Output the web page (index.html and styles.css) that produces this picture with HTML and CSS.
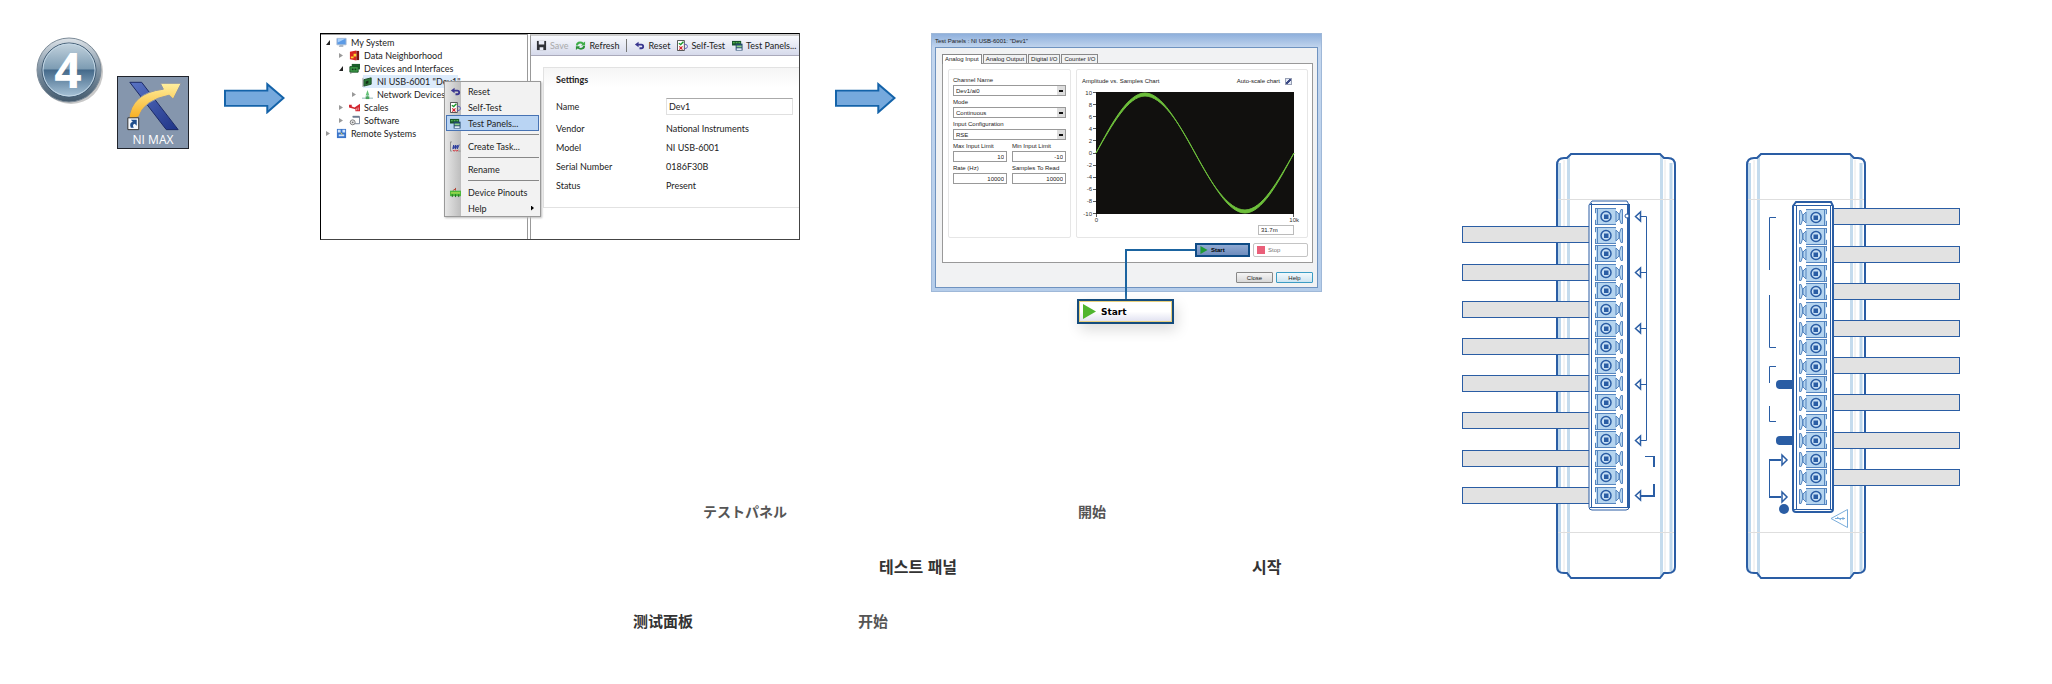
FILE: index.html
```
<!DOCTYPE html>
<html lang="en">
<head>
    <meta charset="UTF-8">
    <meta name="viewport" content="width=device-width, initial-scale=1.0">
    <title>NI MAX - Test Panels</title>
    <link rel="stylesheet" href="styles.css">
</head>
<body>
    <!-- shared icons -->
    <svg class="defs" aria-hidden="true">
        <defs>
            <linearGradient id="ball" x1="0" y1="0" x2="0" y2="1">
                <stop offset="0" stop-color="#c3d3de"/>
                <stop offset=".48" stop-color="#7d9cb3"/>
                <stop offset=".5" stop-color="#44698a"/>
                <stop offset="1" stop-color="#a9c4d8"/>
            </linearGradient>
            <linearGradient id="rim" x1="0" y1="0" x2="0" y2="1">
                <stop offset="0" stop-color="#dde3e8"/>
                <stop offset=".5" stop-color="#7f93a4"/>
                <stop offset="1" stop-color="#43596c"/>
            </linearGradient>
            <linearGradient id="gold" x1="0" y1="0" x2="0" y2="1">
                <stop offset="0" stop-color="#fff0a0"/>
                <stop offset="1" stop-color="#f7ac1c"/>
            </linearGradient>
            <linearGradient id="navy" x1="0" y1="0" x2="1" y2="1">
                <stop offset="0" stop-color="#5a74c4"/>
                <stop offset="1" stop-color="#1f3487"/>
            </linearGradient>
        </defs>
        <symbol id="arrow" viewBox="0 0 62 32">
            <path d="M1 8.500H44V2L60.500 16 44 30.500V24H1Z" fill="#76a9dd" stroke="#1463a9" stroke-width="2"/>
        </symbol>
        <symbol id="i-reset" viewBox="0 0 12 12">
            <path d="M1 5L5 2V4H8Q11 4 11 7T8 10H6V8H8Q9 8 9 7T8 6H5V8Z" fill="#39358f"/>
        </symbol>
        <symbol id="i-test" viewBox="0 0 12 12">
            <path d="M.500 .500H8V11.500H.500Z" fill="#fff" stroke="#444"/>
            <path d="M2 3.500L4 5 7 2" fill="none" stroke="#1b9a2c" stroke-width="1.500"/>
            <path d="M2.500 7L6 10.500M6 7L2.500 10.500" stroke="#d3202a" stroke-width="1.300"/>
            <path d="M8 4.500Q11.500 4.500 11.500 7T8 9.500" fill="none" stroke="#5a5ab8"/>
        </symbol>
        <symbol id="i-panels" viewBox="0 0 12 12">
            <path d="M0 1H10V6H0Z" fill="#17552b"/>
            <path d="M1 3H3M4 3H6M7 3H9" stroke="#6fdc5f"/>
            <path d="M4 4H11.500V11.500H4Z" fill="#244a6e"/>
            <path d="M5 6H10.500V8H5Z" fill="#8fd18a"/>
            <path d="M5 9H10.500V11H5Z" fill="#dfe9f5"/>
        </symbol>
        <symbol id="i-save" viewBox="0 0 12 12">
            <path d="M1 1H11V11H1Z" fill="#2f3136"/>
            <path d="M3 1H9V5H3ZM4 8H8V11H4Z" fill="#e9ecf6"/>
        </symbol>
        <symbol id="i-refresh" viewBox="0 0 12 12">
            <path d="M1 6Q1 2 5.500 1.700 8 1.700 9.300 3L11 1.500V6H6.500L8 4.500Q4.500 2.500 3 6Z" fill="#3fae49"/>
            <path d="M11 6.500Q11 10.300 6.500 10.500 4.500 10.500 2.900 9.300L1 11V6.800H5.500L4.200 8Q7.500 9.800 9 6.500Z" fill="#2a9136"/>
        </symbol>
        <symbol id="i-task" viewBox="0 0 12 12">
            <path d="M2 1H.500V11H2M9 11H11.500" fill="none" stroke="#888"/>
            <path d="M3 8.500L4 4.500V8.500L6 4.500V8.500L8 4.500V8.500L10 4" fill="none" stroke="#22349b"/>
            <path d="M3 10L4.500 11 6 10 7.500 11 9 10" fill="none" stroke="#d3202a"/>
        </symbol>
        <symbol id="i-pinout" viewBox="0 0 12 12">
            <path d="M6 4V1M3 4L6 2" fill="none" stroke="#b04030"/>
            <path d="M0 4H12V10H0Z" fill="#4bb83c"/>
            <path d="M1 6.500H11" stroke="#d9ef5a"/>
            <path d="M2.500 8V11M6 8V11M9.500 8V11" stroke="#1d6b1d"/>
        </symbol>
        <symbol id="i-pc" viewBox="0 0 12 12">
            <path d="M1 1.500H11V8.500H1Z" fill="#5c9be6" stroke="#a8bad2"/>
            <path d="M2 2H10L2 6Z" fill="#a9d0fa"/>
            <path d="M4 9H8V10.500H3" fill="#98a4b4"/>
        </symbol>
        <symbol id="i-data" viewBox="0 0 12 12">
            <path d="M1 2L8 .500V11.500L1 10Z" fill="#d9251f"/>
            <path d="M8 1H11V11H8Z" fill="#7b1511"/>
            <path d="M2 7H5V9H2ZM5 4H8V7H5Z" fill="#ffd52e"/>
        </symbol>
        <symbol id="i-devs" viewBox="0 0 12 12">
            <path d="M3 1H12V7H3Z" fill="#1b5e2b"/>
            <path d="M1 4H10V10H1Z" fill="#3d9e49" stroke="#174d22"/>
            <path d="M3 6H5V8H3ZM6 6H8V8H6Z" fill="#14391c"/>
            <path d="M2 10V12" stroke="#888"/>
        </symbol>
        <symbol id="i-card" viewBox="0 0 12 12">
            <path d="M2 4L10 2V9L2 11Z" fill="#2d7a38" stroke="#1a4a24"/>
            <path d="M4 6L7 5V8L4 9Z" fill="#143018"/>
            <path d="M1 2V12" stroke="#999"/>
        </symbol>
        <symbol id="i-net" viewBox="0 0 12 12">
            <path d="M4 7L6 1 8 7Z" fill="#5fc470"/>
            <path d="M0 10H12M6 6V10" stroke="#8ab0b0"/>
            <path d="M4 8H8V11H4Z" fill="#49a55c"/>
        </symbol>
        <symbol id="i-scale" viewBox="0 0 12 12">
            <path d="M0 3H3V5L6 6 12 2V10H7V8L0 6Z" fill="#d22630"/>
            <path d="M8 7V9M10 6V9" stroke="#f4b5b8"/>
        </symbol>
        <symbol id="i-soft" viewBox="0 0 12 12">
            <path d="M4 1.500H11.500V9.500H6" fill="#fff" stroke="#6d7b90"/>
            <path d="M4 2H11" stroke="#6d7b90" stroke-width="2"/>
            <circle cx="4" cy="8" r="2.700" fill="#e9e9e9" stroke="#777"/>
            <circle cx="4" cy="8" r="1" fill="#777"/>
        </symbol>
        <symbol id="i-remote" viewBox="0 0 12 12">
            <path d="M1 1H11V11H1Z" fill="#3a74c9"/>
            <path d="M2 2H5V5H2ZM7 2H10V5H7ZM3 7H9V9H3Z" fill="#cfe3fb"/>
            <path d="M5 5L7 7" stroke="#f0cf3a"/>
        </symbol>
        <symbol id="case" viewBox="0 0 122 432" overflow="visible">
            <path d="M4.500 12V420M116 12V420" stroke="#bdd7ec" stroke-width="3"/>
            <path d="M13.500 5V426M106.500 5V426" stroke="#c4dbed" stroke-width="3"/>
            <path d="M9 9V422M110 9V422" stroke="#e6e6e6"/>
            <path d="M2 48.500H120M2 381.500H120" stroke="#dedede"/>
            <path d="M2 14Q2 7 9 7H12L16 3H105L109 7H113Q120 7 120 14V416Q120 422 113 422H109L105 427H16L12 422H9Q2 422 2 416Z" fill="none" stroke="#2a5da4" stroke-width="2"/>
        </symbol>
        <symbol id="screw" viewBox="0 0 30 17" overflow="visible">
            <path d="M0 0H21V17H0V12L1 11V6L0 5Z" fill="#b5d4ef"/>
            <path d="M0 .500H21M0 16.500H21M2.500 0V17M.500 0V5M.500 12V17" stroke="#5585bf"/>
            <path d="M21 3L24 6V11L21 14Z" fill="#b5d4ef" stroke="#5585bf"/>
            <path d="M27.500 1.500H26L24.500 6V11L26 15.500H27.500Z" fill="#b5d4ef" stroke="#5585bf"/>
            <circle cx="11" cy="8.500" r="5" fill="#c8e0f5" stroke="#2a5da4" stroke-width="1.500"/>
            <path d="M9 6.500H13.500V11H9Z" fill="#2a5da4"/>
        </symbol>
        <symbol id="screws" viewBox="0 0 30 300" overflow="visible">
            <use href="#screw" width="30" height="17" y="0"/>
            <use href="#screw" width="30" height="17" y="19"/>
            <use href="#screw" width="30" height="17" y="37"/>
            <use href="#screw" width="30" height="17" y="56"/>
            <use href="#screw" width="30" height="17" y="74"/>
            <use href="#screw" width="30" height="17" y="93"/>
            <use href="#screw" width="30" height="17" y="112"/>
            <use href="#screw" width="30" height="17" y="130"/>
            <use href="#screw" width="30" height="17" y="149"/>
            <use href="#screw" width="30" height="17" y="167"/>
            <use href="#screw" width="30" height="17" y="186"/>
            <use href="#screw" width="30" height="17" y="205"/>
            <use href="#screw" width="30" height="17" y="223"/>
            <use href="#screw" width="30" height="17" y="242"/>
            <use href="#screw" width="30" height="17" y="260"/>
            <use href="#screw" width="30" height="17" y="279"/>
        </symbol>
        <symbol id="wires" viewBox="0 0 128 280" overflow="visible">
            <g fill="#e2e2e2" stroke="#2a5da4">
                <rect x=".500" y=".500" width="127" height="16"/>
                <rect x=".500" y="38.500" width="127" height="16"/>
                <rect x=".500" y="75.500" width="127" height="16"/>
                <rect x=".500" y="112.500" width="127" height="16"/>
                <rect x=".500" y="149.500" width="127" height="16"/>
                <rect x=".500" y="186.500" width="127" height="16"/>
                <rect x=".500" y="224.500" width="127" height="16"/>
                <rect x=".500" y="261.500" width="127" height="16"/>
            </g>
        </symbol>
    </svg>

    <main class="sheet">
        <section class="guide">
            <div class="steps">
                <div class="start">
                    <svg class="badge" viewBox="0 0 68 68" role="img" aria-label="Step 4">
                        <circle cx="35" cy="35" r="32" fill="#c9c9c9"/>
                        <circle cx="33" cy="33" r="32" fill="url(#rim)" stroke="#7c8b98"/>
                        <circle cx="33" cy="33" r="27" fill="url(#ball)" stroke="#3f5a72"/>
                        <circle cx="33" cy="33" r="26" fill="none" stroke="#c5d8e6"/>
                        <text x="32" y="51" text-anchor="middle">4</text>
                    </svg>
                    <figure class="shortcut">
                        <svg viewBox="0 0 71 54" aria-hidden="true">
                            <path d="M12 5H24L61 53H49Z" fill="url(#navy)" stroke="#1b2a66"/>
                            <path d="M11 43Q13 16 46 12L43 6 64 6 56 22 52 18Q26 23 21 40Z" fill="url(#gold)" stroke="#8c94a5"/>
                            <path d="M10 41H21V53H10Z" fill="#f4f8fc" stroke="#333"/>
                            <path d="M13 51Q11 46 15 45L13 43H19V49L17 47Q14 48 16 51Z" fill="#1f4e8c"/>
                        </svg>
                        <figcaption>NI MAX</figcaption>
                    </figure>
                </div>

                <svg class="arrow"><use href="#arrow"/></svg>

                <!-- MAX window -->
                <div class="max">
                    <div class="tree">
                        <ul>
                            <li><i class="open"></i><svg><use href="#i-pc"/></svg><span>My System</span>
                                <ul>
                                    <li><i></i><svg><use href="#i-data"/></svg><span>Data Neighborhood</span></li>
                                    <li><i class="open"></i><svg><use href="#i-devs"/></svg><span>Devices and Interfaces</span>
                                        <ul>
                                            <li class="picked"><i class="none"></i><svg><use href="#i-card"/></svg><span>NI USB-6001 "Dev1"</span></li>
                                            <li><i></i><svg><use href="#i-net"/></svg><span>Network Devices</span></li>
                                        </ul>
                                    </li>
                                    <li><i></i><svg><use href="#i-scale"/></svg><span>Scales</span></li>
                                    <li><i></i><svg><use href="#i-soft"/></svg><span>Software</span></li>
                                </ul>
                            </li>
                            <li><i></i><svg><use href="#i-remote"/></svg><span>Remote Systems</span></li>
                        </ul>
                    </div>
                    <div class="detail">
                        <div class="toolbar">
                            <button class="off"><svg><use href="#i-save"/></svg>Save</button>
                            <button><svg><use href="#i-refresh"/></svg>Refresh</button>
                            <span class="bar"></span>
                            <button><svg><use href="#i-reset"/></svg>Reset</button>
                            <button><svg><use href="#i-test"/></svg>Self-Test</button>
                            <button><svg><use href="#i-panels"/></svg>Test Panels...</button>
                        </div>
                        <div class="settings">
                            <h2>Settings</h2>
                            <div class="pair"><label for="name">Name</label><input id="name" type="text" value="Dev1"></div>
                            <div class="pair"><span>Vendor</span><span>National Instruments</span></div>
                            <div class="pair"><span>Model</span><span>NI USB-6001</span></div>
                            <div class="pair"><span>Serial Number</span><span>0186F30B</span></div>
                            <div class="pair"><span>Status</span><span>Present</span></div>
                        </div>
                    </div>
                    <div class="menu">
                        <button><svg><use href="#i-reset"/></svg>Reset</button>
                        <button><svg><use href="#i-test"/></svg>Self-Test</button>
                        <button class="hot"><svg><use href="#i-panels"/></svg>Test Panels...</button>
                        <hr>
                        <button><svg><use href="#i-task"/></svg>Create Task...</button>
                        <hr>
                        <button><svg></svg>Rename</button>
                        <hr>
                        <button><svg><use href="#i-pinout"/></svg>Device Pinouts</button>
                        <button><svg></svg>Help<b></b></button>
                    </div>
                </div>

                <svg class="arrow"><use href="#arrow"/></svg>

                <!-- Test Panels dialog -->
                <div class="dialog">
                    <div class="title">Test Panels : NI USB-6001: "Dev1"</div>
                    <div class="client">
                        <div class="tabs">
                            <button class="on">Analog Input</button>
                            <button>Analog Output</button>
                            <button>Digital I/O</button>
                            <button>Counter I/O</button>
                        </div>
                        <div class="page">
                            <div class="group form">
                                <label for="chan">Channel Name</label>
                                <select id="chan"><option>Dev1/ai0</option></select>
                                <label for="mode">Mode</label>
                                <select id="mode"><option>Continuous</option></select>
                                <label for="conf">Input Configuration</label>
                                <select id="conf"><option>RSE</option></select>
                                <div class="two">
                                    <div><label for="max">Max Input Limit</label><input id="max" type="text" value="10"></div>
                                    <div><label for="min">Min Input Limit</label><input id="min" type="text" value="-10"></div>
                                </div>
                                <div class="two">
                                    <div><label for="rate">Rate (Hz)</label><input id="rate" type="text" value="10000"></div>
                                    <div><label for="samples">Samples To Read</label><input id="samples" type="text" value="10000"></div>
                                </div>
                            </div>
                            <div class="group graph">
                                <div class="caption">
                                    <span>Amplitude vs. Samples Chart</span>
                                    <label>Auto-scale chart <input type="checkbox" checked></label>
                                </div>
                                <svg class="plot" viewBox="0 0 220 136">
                                    <path d="M14 4H212V126H14Z" fill="#11100e"/>
                                    <path d="M11 4.500H14M11 16.500H14M11 28.500H14M11 40.500H14M11 52.500H14M11 65.500H14M11 77.500H14M11 89.500H14M11 101.500H14M11 113.500H14M11 125.500H14M14.500 126V129M211.500 126V129" stroke="#555"/>
                                    <path d="M14 65C30 35 46 5 63 5S96 35 113 65S146 125 163 125S196 95 212 65C196 93 180 122 163 122S129 95 113 65S80 8 63 8S30 37 14 65Z" fill="#6dbf3b" stroke="#6dbf3b"/>
                                    <g text-anchor="end">
                                        <text x="10" y="7">10</text>
                                        <text x="10" y="19">8</text>
                                        <text x="10" y="31">6</text>
                                        <text x="10" y="43">4</text>
                                        <text x="10" y="55">2</text>
                                        <text x="10" y="67">0</text>
                                        <text x="10" y="79">-2</text>
                                        <text x="10" y="91">-4</text>
                                        <text x="10" y="103">-6</text>
                                        <text x="10" y="115">-8</text>
                                        <text x="10" y="128">-10</text>
                                        <text x="16" y="134">0</text>
                                        <text x="217" y="134">10k</text>
                                    </g>
                                </svg>
                                <input class="value" type="text" value="31.7m" aria-label="Value">
                            </div>
                            <div class="run">
                                <button class="go"><svg viewBox="0 0 8 9"><path d="M0 0L8 4.500 0 9Z" fill="#1f9a35"/></svg>Start</button>
                                <button class="stop"><svg viewBox="0 0 8 8"><path d="M0 0H8V8H0Z" fill="#ea5f79"/></svg>Stop</button>
                            </div>
                        </div>
                        <div class="foot">
                            <button>Close</button>
                            <button class="help">Help</button>
                        </div>
                    </div>
                    <span class="line"></span>
                    <button class="callout"><svg viewBox="0 0 13 15"><path d="M0 0L13 7.500 0 15Z" fill="#4fb52f"/></svg>Start</button>
                </div>
            </div>

            <div class="terms">
                <span class="ja c2" lang="ja">テストパネル</span>
                <span class="ja c5" lang="ja">開始</span>
                <span class="ko c4" lang="ko">테스트 패널</span>
                <span class="ko c6" lang="ko">시작</span>
                <span class="zh c1" lang="zh-CN">测试面板</span>
                <span class="zh c3" lang="zh-CN">开始</span>
            </div>
        </section>

        <!-- terminal blocks -->
        <section class="pinouts">
            <svg viewBox="0 0 220 432" role="img" aria-label="Left terminal block">
                <use href="#case" x="95" width="122" height="432"/>
                <use href="#wires" x="2" y="75" width="128" height="280"/>
                <path d="M129 54L132 50H167L169 54V356Q169 359 166 359H132Q129 359 129 356Z" fill="#fff" stroke="#2a5da4"/>
                <path d="M131.500 52V357M130 53.500H168M130 356.500H168" stroke="#2a5da4"/>
                <path d="M168.500 53V357" stroke="#2a5da4" stroke-width="3"/>
                <use href="#screws" x="135" y="57" width="30" height="300"/>
                <circle cx="167" cy="65" r="2" fill="#fff" stroke="#2a5da4"/>
                <path d="M181 65.500H186.500V289.500H181M181 121.500H186M181 177.500H186M181 233.500H186" fill="none" stroke="#2a5da4"/>
                <path d="M175.500 65.500L180.500 61V70ZM175.500 121.500L180.500 117V126ZM175.500 177.500L180.500 173V182ZM175.500 233.500L180.500 229V238ZM175.500 289.500L180.500 285V294ZM175.500 344.500L180.500 340V349Z" fill="#fff" stroke="#2a5da4" stroke-width="1.500"/>
                <path d="M185 305.500H194" fill="none" stroke="#2a5da4"/>
                <path d="M194 305V316M194 333V345H181" fill="none" stroke="#2a5da4" stroke-width="2"/>
            </svg>
            <svg viewBox="0 0 220 432" role="img" aria-label="Right terminal block">
                <use href="#case" x="1" width="122" height="432"/>
                <use href="#wires" x="88" y="57" width="128" height="280"/>
                <g fill="#2a5da4">
                    <rect x="32" y="229" width="22" height="9" rx="4"/>
                    <rect x="32" y="285" width="22" height="9" rx="4"/>
                </g>
                <path d="M49 55L52 51H87L89 55V358Q89 361 86 361H52Q49 361 49 358Z" fill="#fff" stroke="#2a5da4" stroke-width="2"/>
                <path d="M52.500 54V358M86.500 54V358M50 54.500H88M50 358.500H88" stroke="#2a5da4"/>
                <use href="#screws" transform="translate(83 58) scale(-1 1)" width="30" height="300"/>
                <path d="M32 66.500H25.500V119M25.500 144V196.500H32M32 215.500H25.500V232M25.500 255V270.500H32" fill="none" stroke="#2a5da4"/>
                <path d="M25.500 309V346" stroke="#2a5da4"/>
                <path d="M25 309H37M25 346H37" stroke="#2a5da4" stroke-width="2"/>
                <path d="M38 304L43 309 38 314ZM38 341L43 346 38 351Z" fill="#fff" stroke="#2a5da4" stroke-width="1.500"/>
                <circle cx="40" cy="358" r="5" fill="#2a5da4"/>
                <path d="M87 367.500L103.500 358.500V376.500ZM91 367.500H101M93 366L97 369M99 366V369" fill="none" stroke="#7aaddb"/>
            </svg>
        </section>
    </main>
</body>
</html>
```
FILE: styles.css
```
*{
    box-sizing: border-box;
}
body{
    margin: 0;
    background-color: #fff;
    font-family: "Open Sans", "Noto Sans", sans-serif;
    color: #222;
}
button, input, select{
    font: inherit;
    color: inherit;
    margin: 0;
    padding: 0;
    border: none;
    border-radius: 0;
    background: none;
}
svg{
    display: block;
    flex: none;
}
.defs{
    position: absolute;
    width: 0;
    height: 0;
}
.sheet{
    display: flex;
    justify-content: space-between;
    padding: 33px 88px 0 36px;
}
.steps{
    display: flex;
    align-items: flex-start;
    gap: 35px;
}
.start{
    display: flex;
    align-items: flex-start;
    gap: 13px;
    padding-top: 4px;
}
.badge{
    width: 68px;
    height: 68px;
    overflow: visible;
}
.badge text{
    font: bold 48px "Open Sans", sans-serif;
    fill: #fff;
}
.shortcut{
    width: 72px;
    margin: 39px 0 0;
    border: 1px solid #20242c;
    background-color: #8596ad;
    color: #fff;
    font-size: 12px;
    line-height: 17px;
    text-align: center;
}
.shortcut svg{
    width: 70px;
    height: 54px;
}
.arrow{
    width: 61px;
    height: 32px;
    margin-top: 49px;
}

/* MAX window */
.max{
    position: relative;
    display: flex;
    width: 480px;
    min-height: 207px;
    border: 1px solid #444;
    border-top-color: #000;
    border-left-color: #000;
    font-family: Lato, sans-serif;
    font-size: 9px;
    line-height: 13px;
}
.max svg{
    width: 11px;
    height: 11px;
}
.tree{
    width: 207px;
    padding: 1px 0 0 3px;
    border-top: 1px solid #999;
    border-right: 1px solid #999;
}
.tree ul{
    list-style: none;
    margin: 0;
    padding: 0;
    line-height: 0;
}
.tree ul ul{
    padding-left: 13px;
}
.tree li{
    white-space: nowrap;
}
.tree li > svg, .tree li > i, .tree li > span{
    display: inline-block;
    vertical-align: middle;
}
.tree li > i{
    width: 4px;
    height: 5px;
    margin: 0 6px 0 2px;
    background-color: #999;
    clip-path: polygon(0 0, 100% 50%, 0 100%);
}
.tree li > i.open{
    background-color: #222;
    clip-path: polygon(100% 0, 100% 100%, 0 100%);
}
.tree li > i.none{
    visibility: hidden;
}
.tree li > span{
    padding-left: 4px;
    line-height: 13px;
}
.picked{
    width: 108px;
    background: linear-gradient(90deg, #fff 12%, #dcebfb 12%);
}
.detail{
    flex: 1;
    min-width: 0;
    margin-left: 2px;
    border-top: 2px solid #ccc;
    border-left: 1px solid #999;
}
.toolbar{
    display: flex;
    align-items: center;
    gap: 7px;
    height: 20px;
    padding-left: 5px;
    background: linear-gradient(#f8f9fd, #d6daeb);
    border-bottom: 1px solid #aab;
    white-space: nowrap;
}
.toolbar button{
    display: flex;
    align-items: center;
    gap: 3px;
}
.toolbar .off{
    color: #aaa;
}
.bar{
    width: 1px;
    height: 13px;
    background-color: #777;
}
.settings{
    margin: 11px 0 0 12px;
    padding: 4px 6px 12px 12px;
    border: 1px solid #e2e2e2;
    border-right: none;
    background: linear-gradient(#f5f5f5, #fff 20px);
}
.settings h2{
    margin: 0 0 9px;
    font-size: 9px;
    line-height: 16px;
}
.pair{
    display: grid;
    grid-template-columns: 110px 1fr;
    align-items: center;
    height: 19px;
}
.pair:nth-child(2){
    margin-bottom: 3px;
}
.pair input{
    width: 100%;
    height: 17px;
    padding-left: 2px;
    border: 1px solid #e0e0e0;
    border-top-color: #aaa;
}
.menu{
    position: absolute;
    top: 47px;
    left: 123px;
    width: 97px;
    padding: 1px 1px 0;
    border: 1px solid #999;
    background: linear-gradient(90deg, #e6e6e6, #bdbdbd 16px, #f2f2f2 16px);
    box-shadow: 1px 1px 2px #bbb;
}
.menu button{
    display: flex;
    align-items: center;
    gap: 7px;
    width: 100%;
    height: 16px;
    padding: 0 5px 0 4px;
    text-align: left;
    white-space: nowrap;
}
.menu .hot{
    background-color: #b9d4f3;
    outline: 1px solid #4773b4;
    outline-offset: -1px;
}
.menu hr{
    height: 1px;
    margin: 3px 0 3px 22px;
    border: none;
    background-color: #888;
}
.menu b{
    width: 3px;
    height: 5px;
    margin-left: auto;
    background-color: #000;
    clip-path: polygon(0 0, 100% 50%, 0 100%);
}

/* Test Panels dialog */
.dialog{
    position: relative;
    width: 391px;
    padding: 0 3px 3px;
    border: 1px solid #9fb8d8;
    background: linear-gradient(#8fb0dc, #c3d6ee 14px, #b5cdea);
    font-family: "Liberation Sans", sans-serif;
    font-size: 6px;
    line-height: 8px;
}
.title{
    padding-top: 3px;
    height: 13px;
}
.client{
    padding: 6px 4px 4px 6px;
    border: 1px solid #6f93c0;
    background-color: #f1f2f3;
}
.tabs{
    display: flex;
    align-items: flex-end;
    gap: 1px;
}
.tabs button{
    height: 9px;
    padding: 0 2px;
    border: 1px solid #888;
    border-bottom: none;
    line-height: 7px;
}
.tabs .on{
    height: 10px;
    margin-bottom: -1px;
    background-color: #fff;
}
.page{
    display: grid;
    grid-template-columns: 123px 1fr;
    gap: 5px;
    padding: 5px 6px 5px 5px;
    border: 1px solid #999;
    background-color: #fff;
}
.group{
    border: 1px solid #e6e6e6;
    border-radius: 2px;
}
.form{
    padding: 6px 4px;
}
.form label, .form input, .form select{
    display: block;
    width: 100%;
}
.form label{
    height: 9px;
}
.form select, .form input{
    height: 11px;
    padding: 0 2px;
    border: 1px solid #999;
}
.form select{
    appearance: none;
    margin-bottom: 2px;
    background: linear-gradient(#111, #111) right 2px center / 4px 2px no-repeat, linear-gradient(#ddd, #ddd) right / 8px 100% no-repeat;
}
.form input{
    text-align: right;
}
.two{
    display: grid;
    grid-template-columns: 1fr 1fr;
    gap: 5px;
    margin-bottom: 2px;
}
.graph{
    padding: 7px 5px 2px;
}
.caption{
    display: flex;
    justify-content: space-between;
    padding-right: 10px;
}
.caption label{
    display: flex;
    align-items: center;
    gap: 5px;
}
.caption input{
    appearance: none;
    width: 7px;
    height: 7px;
    border: 1px solid #98a0b4;
    background: linear-gradient(135deg, transparent 35%, #3c4a86 35%, #3c4a86 65%, transparent 65%) #e3e8f4;
}
.plot{
    width: 220px;
    height: 136px;
    margin-top: 3px;
}
.plot text{
    fill: #333;
}
.value{
    display: block;
    width: 36px;
    height: 10px;
    margin: 1px 8px 0 auto;
    padding-left: 2px;
    border: 1px solid #bbb;
}
.run{
    grid-column: 2;
    display: flex;
    justify-content: flex-end;
    gap: 3px;
}
.run button{
    display: flex;
    align-items: center;
    gap: 3px;
    width: 55px;
    height: 14px;
    padding-left: 3px;
    border: 1px solid #c4c4c4;
    border-radius: 2px;
    color: #777;
}
.run svg{
    width: 8px;
    height: 8px;
}
.run .go{
    border: 2px solid #0e4b85;
    border-radius: 0;
    background: linear-gradient(#8fa9d2, #6f8dbd);
    color: #000;
    font-weight: bold;
}
.foot{
    display: flex;
    justify-content: flex-end;
    gap: 3px;
    padding-top: 9px;
}
.foot button{
    width: 37px;
    height: 11px;
    border: 1px solid #888;
    border-radius: 1px;
    background: linear-gradient(#f5f5f5, #d8d8d8);
}
.foot .help{
    border-color: #3b9cc4;
    background: linear-gradient(#f2f9fd, #cde4f0);
}
.line{
    position: absolute;
    top: 215px;
    left: 193px;
    width: 70px;
    height: 50px;
    border-top: 2px solid #1b64a0;
    border-left: 2px solid #1b64a0;
}
.callout{
    position: absolute;
    top: 265px;
    left: 145px;
    display: flex;
    align-items: center;
    gap: 5px;
    width: 97px;
    height: 25px;
    padding-left: 4px;
    border: 2px solid #154c7d;
    outline: 1px solid #e8cf7c;
    outline-offset: -3px;
    background: linear-gradient(#fff, #fff 50%, #dfe0f0);
    box-shadow: 3px 6px 14px #ddd;
    color: #000;
    font: bold 9px "DejaVu Sans", sans-serif;
}
.callout svg{
    width: 13px;
    height: 15px;
}

/* translated names */
.terms{
    display: grid;
    grid-template-columns: 70px 155px 21px 199px 174px auto;
    grid-auto-rows: 55px;
    align-items: center;
    margin-top: 191px;
    padding-left: 597px;
    color: #333;
    font-size: 15px;
    font-weight: bold;
    white-space: nowrap;
}
.ja{
    grid-row: 1;
    font-family: "Noto Sans CJK JP", sans-serif;
    font-size: 14px;
    color: #555;
}
.ko{
    grid-row: 2;
    font-family: "Noto Sans CJK KR", sans-serif;
    font-size: 16px;
}
.zh{
    grid-row: 3;
    font-family: "Noto Sans CJK SC", sans-serif;
}
.c1{
    grid-column: 1;
}
.c2{
    grid-column: 2;
}
.c3{
    grid-column: 3;
    color: #555;
}
.c4{
    grid-column: 4;
}
.c5{
    grid-column: 5;
}
.c6{
    grid-column: 6;
}

.pinouts{
    display: flex;
    gap: 64px;
    padding-top: 118px;
}
.pinouts svg{
    width: 220px;
    height: 432px;
}
```
